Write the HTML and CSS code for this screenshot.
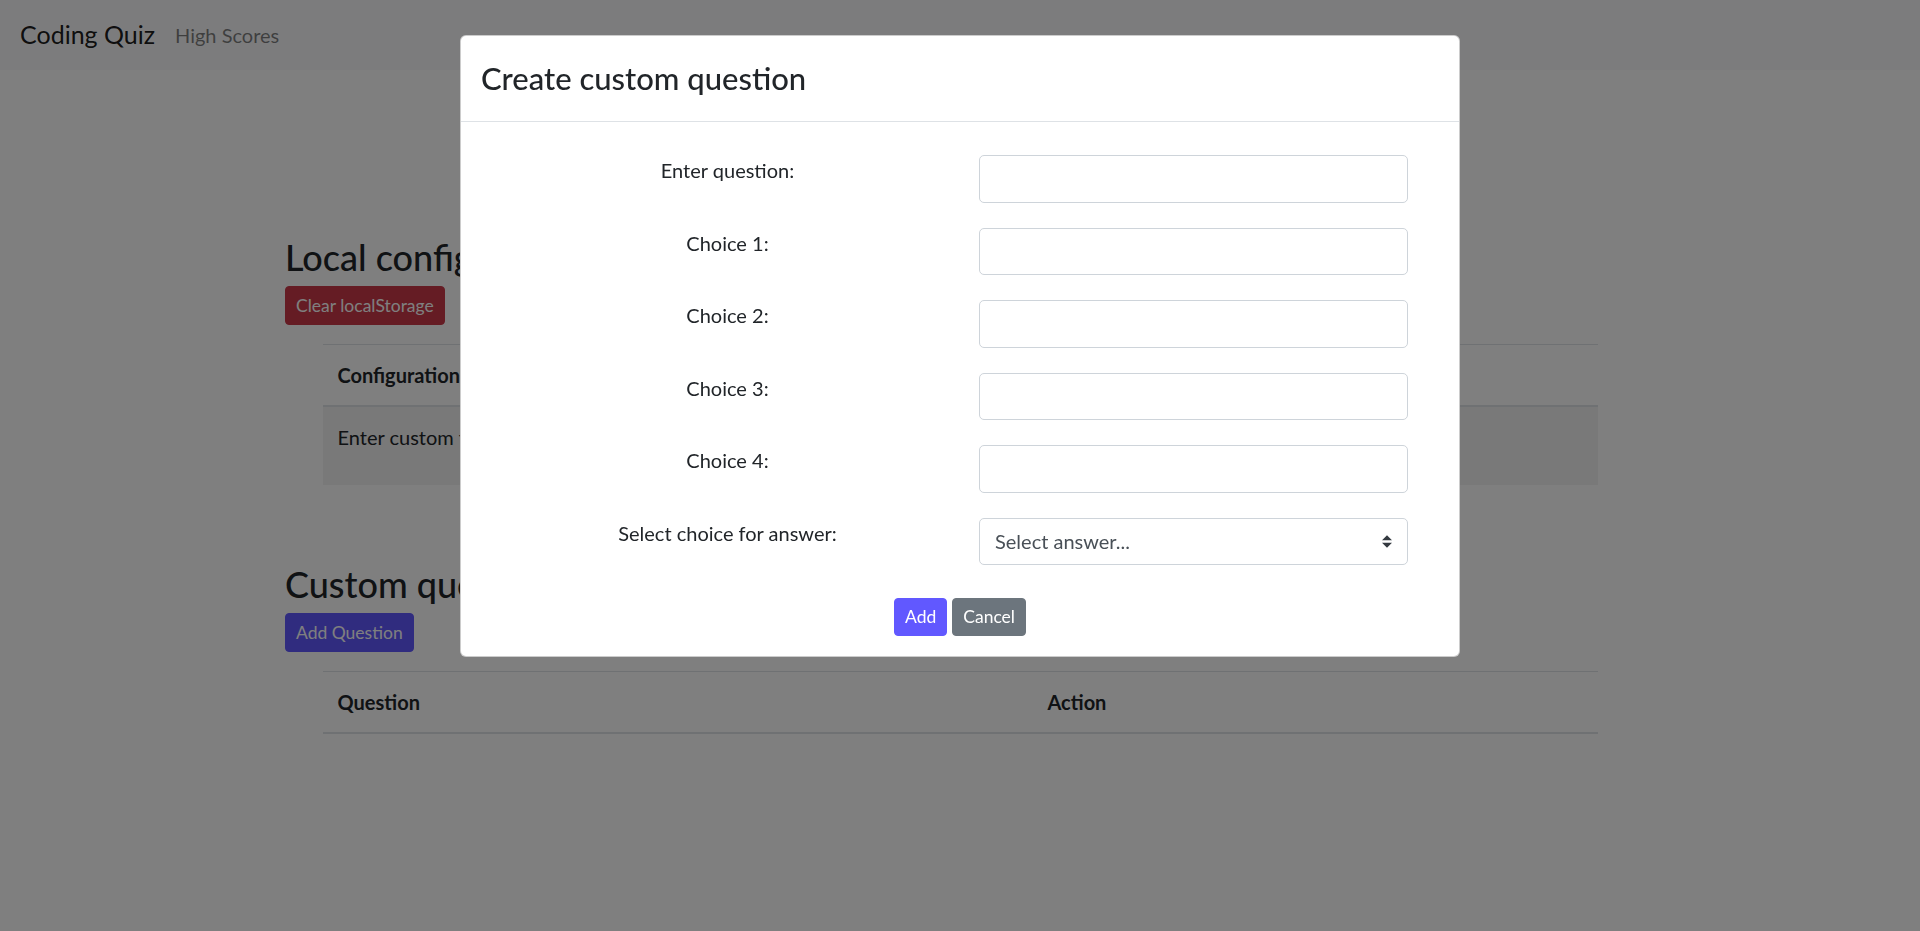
FILE: index.html
```html
<!DOCTYPE html>
<html lang="en">
<head>
<meta charset="utf-8">
<title>Coding Quiz</title>
<link rel="stylesheet" href="styles.css">
</head>
<body>
<nav class="navbar">
  <a class="brand" href="#">Coding Quiz</a>
  <a class="nav-link" href="#">High Scores</a>
</nav>

<main class="container">
  <section class="section section-local">
    <h3 class="heading">Local configuration</h3>
    <button class="btn btn-sm btn-danger" type="button">Clear localStorage</button>
    <table class="table table-striped">
      <thead>
        <tr><th class="col-config">Configuration</th><th>Value</th></tr>
      </thead>
      <tbody>
        <tr>
          <td>Enter custom time limit (seconds):</td>
          <td><input class="form-control form-control-narrow" type="text"></td>
        </tr>
      </tbody>
    </table>
  </section>

  <section class="section section-custom">
    <h3 class="heading">Custom questions</h3>
    <button class="btn btn-sm btn-primary" type="button">Add Question</button>
    <table class="table">
      <thead>
        <tr><th class="col-question">Question</th><th>Action</th></tr>
      </thead>
    </table>
  </section>
</main>

<div class="modal-backdrop"></div>

<div class="modal">
  <div class="modal-dialog">
    <div class="modal-content">
      <div class="modal-header">
        <h4 class="modal-title">Create custom question</h4>
      </div>
      <div class="modal-body">
        <form class="question-form">
          <label class="form-label">Enter question:</label>
          <input class="form-control" type="text">
          <label class="form-label">Choice 1:</label>
          <input class="form-control" type="text">
          <label class="form-label">Choice 2:</label>
          <input class="form-control" type="text">
          <label class="form-label">Choice 3:</label>
          <input class="form-control" type="text">
          <label class="form-label">Choice 4:</label>
          <input class="form-control" type="text">
          <label class="form-label">Select choice for answer:</label>
          <div class="select-wrap">
            <select class="custom-select">
              <option>Select answer...</option>
              <option>Choice 1</option>
              <option>Choice 2</option>
              <option>Choice 3</option>
              <option>Choice 4</option>
            </select>
            <svg class="select-arrow" width="10" height="13" viewBox="0 0 4 5" aria-hidden="true">
              <path fill="#343a40" d="M2 0L0 2h4zm0 5L0 3h4z"/>
            </svg>
          </div>
        </form>
        <div class="modal-actions">
          <button class="btn btn-modal btn-primary" type="button">Add</button>
          <button class="btn btn-modal btn-secondary" type="button">Cancel</button>
        </div>
      </div>
    </div>
  </div>
</div>
</body>
</html>
```

FILE: styles.css
```css
* {
  box-sizing: border-box;
}

html, body {
  margin: 0;
  padding: 0;
}

body {
  background: #ffffff;
  color: #212529;
  font-family: Lato, "Open Sans", sans-serif;
  font-size: 20px;
  line-height: 1.5;
  min-height: 931px;
  overflow: hidden;
}

/* ---------- navbar ---------- */
.navbar {
  display: flex;
  align-items: center;
  height: 70px;
  padding: 10px 20px;
  background: #f8f9fa;
}

.brand {
  font-size: 25px;
  line-height: 37.5px;
  padding: 6px 0;
  margin-right: 20px;
  color: rgba(0, 0, 0, 0.9);
  text-decoration: none;
}

.nav-link {
  font-size: 20px;
  line-height: 30px;
  padding: 10px 0;
  color: rgba(0, 0, 0, 0.5);
  text-decoration: none;
}

/* ---------- page content ---------- */
.container {
  width: 1350px;
  margin: 0 auto;
  padding-top: 166px;
}

.section-custom {
  margin-top: 78px;
}

.heading {
  margin: 0 0 7px;
  font-size: 36px;
  line-height: 43px;
  font-weight: 500;
  color: #212529;
}

.btn {
  display: inline-block;
  border: 1px solid transparent;
  font-family: inherit;
  color: #ffffff;
  cursor: pointer;
}

.btn-sm {
  height: 39px;
  padding: 0 10px;
  font-size: 17.5px;
  line-height: 37px;
  border-radius: 4px;
  margin-bottom: 19px;
}

.btn-danger {
  background: #ca3848;
  border-color: #ca3848;
}

.btn-primary {
  background: #6158ff;
  border-color: #6158ff;
}

.btn-secondary {
  background: #6c757d;
  border-color: #6c757d;
}

.table {
  width: 1275px;
  margin: 0 auto 20px;
  border-collapse: collapse;
  color: #212529;
}

.table th,
.table td {
  padding: 15px;
  text-align: left;
  vertical-align: top;
  border-top: 1px solid #dee2e6;
  line-height: 30px;
}

.table thead th {
  vertical-align: bottom;
  border-bottom: 2px solid #dee2e6;
  font-weight: 700;
}

.table-striped tbody tr:nth-of-type(odd) {
  background: rgba(0, 0, 0, 0.05);
}

.col-config {
  width: 600px;
}

.col-question {
  width: 710px;
}

.form-control {
  display: block;
  width: 100%;
  height: 47.5px;
  padding: 0 15px;
  font-family: inherit;
  font-size: 20px;
  color: #495057;
  background: #ffffff;
  border: 1px solid #ced4da;
  border-radius: 5px;
}

.form-control-narrow {
  width: 420px;
}

/* ---------- modal ---------- */
.modal-backdrop {
  position: fixed;
  inset: 0;
  background: rgba(0, 0, 0, 0.5);
}

.modal {
  position: fixed;
  inset: 0;
}

.modal-dialog {
  width: 1000px;
  margin: 35px auto 0;
}

.modal-content {
  background: #ffffff;
  border: 1px solid rgba(0, 0, 0, 0.2);
  border-radius: 6px;
}

.modal-header {
  padding: 20px;
  border-bottom: 1px solid #dee2e6;
}

.modal-title {
  margin: 0;
  font-size: 31px;
  line-height: 45px;
  font-weight: 500;
  color: #212529;
}

.modal-body {
  padding: 33px 20px 20px;
}

.question-form {
  display: grid;
  grid-template-columns: 493px 429px;
  column-gap: 5px;
  row-gap: 25px;
  align-items: start;
}

.form-label {
  text-align: center;
  line-height: 30px;
  margin-top: 0;
  color: #212529;
}

.select-wrap {
  position: relative;
}

.custom-select {
  display: block;
  width: 100%;
  height: 47.5px;
  padding: 0 40px 0 15px;
  font-family: inherit;
  font-size: 20px;
  color: #495057;
  background: #ffffff;
  border: 1px solid #ced4da;
  border-radius: 5px;
  appearance: none;
  -webkit-appearance: none;
}

.select-arrow {
  position: absolute;
  right: 16px;
  top: 17px;
}

.modal-actions {
  display: flex;
  justify-content: center;
  gap: 5px;
  margin-top: 33px;
}

.btn-modal {
  height: 38px;
  padding: 0 10px;
  font-size: 17.5px;
  line-height: 36px;
  border-radius: 4px;
}
```
